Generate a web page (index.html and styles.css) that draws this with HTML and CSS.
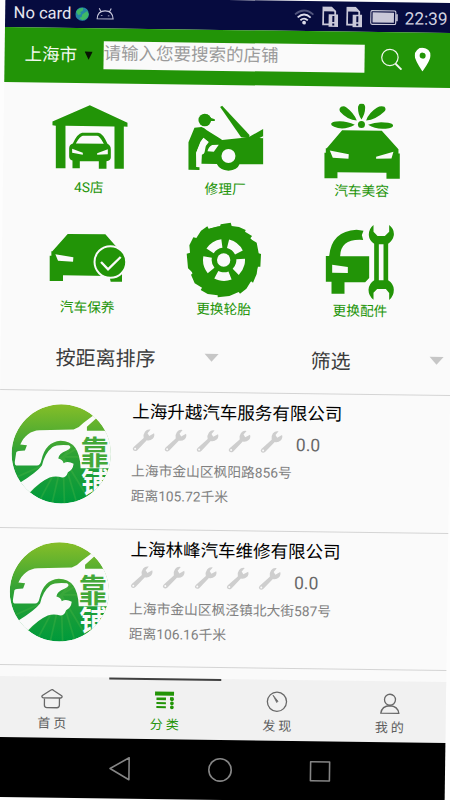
FILE: index.html
```html
<!DOCTYPE html>
<html lang="zh-CN">
<head>
<meta charset="utf-8">
<title>分类</title>
<link rel="stylesheet" href="styles.css">
</head>
<body>
<svg class="defs" aria-hidden="true">
  <defs>
    <linearGradient id="leaf" x1="0" y1="0" x2="0" y2="1">
      <stop offset="0" stop-color="#86be28"/><stop offset=".5" stop-color="#2fa136"/><stop offset="1" stop-color="#009a3c"/>
    </linearGradient>
    <clipPath id="disc"><circle cx="185" cy="191" r="149"/></clipPath>
    <symbol id="wrench" viewBox="0 0 24 24">
      <path d="M2.300 19.300L12.200 10.200Q11.300 6.600 13.400 3.700Q15.600 .8 19 1.600L16 5.300L17.700 8L22.500 5.300Q23.600 8.300 21.200 10.700Q18.700 13 15.300 12.300L6 22.300Q3.800 24 2 22.500Q.5 21 2.300 19.300Z"/>
      <circle cx="3.800" cy="20.900" r="1" fill="#fafafa"/>
    </symbol>
    <symbol id="logo" viewBox="20 26 330 330">
      <g transform="rotate(-.77 185 191)">
        <g clip-path="url(#disc)">
          <circle cx="185" cy="191" r="149" fill="url(#leaf)"/>
          <g stroke="#58b947" stroke-width="5" opacity=".3">
            <path d="M190 200L30 270M190 200L70 330M190 200L110 350M190 200L155 350M190 200L195 350M190 200L235 350M190 200L275 340M190 200L240 170M190 200L225 160M190 200L243 200"/>
          </g>
          <path fill="#fafafa" d="M120 120L222 118Q240 112 252 98L284 74L292 83L262 110V122H345V234H243Q240 152 183 152Q137 155 125 212Q122 226 112 226H50Q44 226 46 212L50 186Q52 181 76 181L82 165L62 163Q80 122 120 120Z"/>
          <path fill="#fafafa" d="M40 295L62 277Q112 246 127 226Q135 190 158 171Q172 162 208 165Q220 172 200 182Q178 190 176 205Q190 208 192 219Q205 211 222 221Q220 240 205 246Q200 262 188 262Q168 256 150 262Q120 275 90 308L60 330Z"/>
        </g>
        <text class="logo-text logo-green" transform="translate(243 223) scale(1 1.120)">靠</text>
        <g clip-path="url(#disc)"><text class="logo-text logo-white" x="245" y="309">铺</text></g>
      </g>
    </symbol>
  </defs>
</svg>

<div class="phone">
  <header class="status">
    <span class="carrier">No card</span>
    <svg class="globe" width="14" height="14" viewBox="0 0 14 14"><circle cx="7" cy="7" r="6.800" fill="#2486a5"/><path fill="#3fb866" d="M2 3Q5 .5 8 1L7.500 4L5 5L6 7L3 8L1 5ZM7 7.500L12 4L13.500 7Q12.500 12 7.500 13.300L4 11L6.500 10Z"/></svg>
    <svg class="droid" width="18" height="13" viewBox="0 0 18 13" fill="none" stroke="#c8c8dc" stroke-width="1.100"><path d="M1 11.500Q1.500 3.500 9 3.500Q16.500 3.500 17 11.500ZM4.800 4.500L3 1M13.200 4.500L15 1"/><path d="M5.500 8v.8M12.500 8v.8" stroke-width="1.600"/></svg>
    <span class="grow"></span>
    <svg class="wifi" width="20" height="16" viewBox="0 0 20 16" fill="none" stroke-width="1.800"><path stroke="#50547c" d="M.8 5.500Q10-2.500 19.200 5.500"/><path stroke="#dcdcea" d="M3.500 8.500Q10 2.500 16.500 8.500M6.300 11.300Q10 7.800 13.700 11.300"/><circle cx="10" cy="13.600" r="1.900" fill="#dcdcea"/></svg>
    <svg class="sim" width="16" height="21" viewBox="0 0 16 21"><path d="M1 1H9L13 5V18H1Z" fill="none" stroke="#c9c8d8" stroke-width="1.800"/><path d="M1 1H9L13 5H1Z" fill="#c9c8d8"/><path d="M6.500 8H16V20.500H6.500Z" fill="#c9c8d8"/><path d="M11.200 9.500V15.500M11.200 17V19" stroke="#060b3f" stroke-width="2"/></svg>
    <svg class="sim" width="16" height="21" viewBox="0 0 16 21"><path d="M1 1H9L13 5V18H1Z" fill="none" stroke="#c9c8d8" stroke-width="1.800"/><path d="M1 1H9L13 5H1Z" fill="#c9c8d8"/><path d="M6.500 8H16V20.500H6.500Z" fill="#c9c8d8"/><path d="M11.200 9.500V15.500M11.200 17V19" stroke="#060b3f" stroke-width="2"/></svg>
    <svg class="battery" width="28" height="15" viewBox="0 0 28 15"><rect x=".6" y=".6" width="25" height="13.800" rx="1.500" fill="none" stroke="#c9c8d8" stroke-width="1.200"/><rect x="2.400" y="2.400" width="21.400" height="10.200" fill="#c9c8d8"/><path d="M26.800 4V11" stroke="#c9c8d8" stroke-width="1.600"/></svg>
    <span class="clock">22:39</span>
  </header>

  <div class="searchbar">
    <span class="city">上海市</span>
    <svg class="caret" width="8" height="9" viewBox="0 0 8 9"><path d="M0 .5H8L4 8.500Z" fill="#071503"/></svg>
    <div class="field">请输入您要搜索的店铺</div>
    <svg class="magnifier" width="22" height="22" viewBox="0 0 22 22" fill="none" stroke="#f2f8f0"><circle cx="9.300" cy="9.300" r="8.200" stroke-width="1.200"/><path d="M15 15.500L21 21.300" stroke-width="1.900"/></svg>
    <svg class="pin" width="16" height="24" viewBox="0 0 16 24"><path fill="#fff" fill-rule="evenodd" d="M8 0A8 8 0 0 1 16 8Q16 12 8 24Q0 12 0 8A8 8 0 0 1 8 0ZM8 5A3 3 0 1 0 8 11A3 3 0 1 0 8 5Z"/></svg>
  </div>

  <section class="categories">
    <div class="category">
      <svg width="80" height="80" viewBox="60 30 240 240"><g transform="rotate(-.77 180 150)">
        <path d="M181 45L294 98V110L283 109V236H255V109L108 107V234H79V107L69 105V94Z"/>
        <path fill-rule="evenodd" d="M130 160Q144 130 158 128H206Q220 129 234 161Q244 166 244 178V202Q244 211 231 213V236H208V213H151V234H129V211Q119 208 119 198V175Q119 163 130 160ZM139 160L223 161Q211 138 203 137H160Q151 139 139 160ZM128 176V188L160 194V188ZM235 177L203 189V194L235 192Z"/>
      </g></svg>
      <span>4S店</span>
    </div>
    <div class="category">
      <svg width="80" height="80" viewBox="48 36 240 240"><g transform="rotate(-.77 168 156)">
        <circle cx="106" cy="90" r="19"/><path d="M112 72L125 84L136 88V93L114 93Z"/>
        <path d="M75 113L96 111Q105 114 112 121L153 146L158 150L237 142L281 117V223H210Q204 240 177 242Q151 240 142 222L96 221L97 194L103 191L105 175Q108 163 116 156L102 143L93 155L80 188V231L90 232V240L57 239V157Z"/>
        <path d="M152 51L158 47L240 135L239 145L215 142Z"/>
        <path fill="#fafafa" d="M80 190L94 156L102 144L118 156L109 168L105 188L96 192L93 231H84ZM114 184Q118 169 128 165L148 164L133 185ZM270 144L282 138V145Z"/>
        <circle cx="177" cy="198" r="21" fill="#fafafa"/>
      </g></svg>
      <span>修理厂</span>
    </div>
    <div class="category">
      <svg width="80" height="80" viewBox="53 41 240 240"><g transform="rotate(-.77 173 161)">
        <circle cx="170" cy="103" r="10.500"/>
        <path d="M170 88Q158 70 160 49Q164 38 171 39Q179 39 181 50Q182 70 170 88ZM156 91Q128 90 106 65Q101 55 109 50Q117 46 125 52Q147 68 156 91ZM184 91Q192 68 216 53Q228 46 239 50Q246 58 238 65Q213 89 184 91ZM150 104Q116 123 88 110Q78 106 79 101Q81 95 94 94Q123 91 150 104ZM190 104Q218 92 250 98Q264 100 265 106Q264 112 253 114Q217 121 190 104Z"/>
        <path fill-rule="evenodd" d="M112 120L231 122L281 177V190H285V266H245V248L98 246V264H59V188H63V174H66ZM75 181L84 203L131 206L132 192ZM266 185L214 200V206L260 205Z"/>
      </g></svg>
      <span>汽车美容</span>
    </div>
    <div class="category">
      <svg width="80" height="80" viewBox="55.5 30.5 240 240"><g transform="rotate(-.77 175.500 150.500)">
        <path d="M115 72L228 73L278 130V215H244L240 198L101 196V213H61V137H66V124H69ZM78 133L86 152L131 155L132 142Z" fill-rule="evenodd"/>
        <circle cx="243" cy="156" r="47.500" stroke="#fafafa" stroke-width="6"/>
        <path d="M215 156L236 178L274 141" fill="none" stroke="#fafafa" stroke-width="7"/>
      </g></svg>
      <span>汽车保养</span>
    </div>
    <div class="category">
      <svg width="80" height="80" viewBox="43.500 36 240 240"><g transform="rotate(-.77 163.500 156)">
        <circle cx="164" cy="150" r="103"/>
        <path d="M154 43L184 38L187 48L209 51L229 60L227 65L248 78L242 86L262 98L268 130L275 132L273 170H265L262 192L251 218L245 214L231 236L212 251L208 246L180 258L145 262V256L115 252L94 240L98 233L76 220L65 194L71 189L56 175L52 131L62 128L60 106L72 82L81 84L95 62L114 49L118 56L152 49Z"/>
        <circle cx="164" cy="150" r="50" pathLength="360" fill="none" stroke="#fafafa" stroke-width="26" stroke-dasharray="49 23" transform="rotate(-76 164 150)"/>
        <circle cx="163" cy="150" r="20" fill="#fafafa"/>
      </g></svg>
      <span>更换轮胎</span>
    </div>
    <div class="category">
      <svg width="80" height="80" viewBox="48 41.500 240 240"><g transform="rotate(-.77 168 161.500)">
        <path d="M73 138Q80 63 155 59L176 62L171 75L175 90Q107 85 106 139H193V204L181 217L119 217V251H80V215H63V138ZM82 164V188L129 189V171Z" fill-rule="evenodd"/>
        <path fill-rule="evenodd" d="M206 45V65L218 78H240L253 65V45Q269 57 267 76Q264 92 250 101V211Q266 221 267 239Q267 258 253 270V249L243 237H217L206 248V269Q191 257 191 239Q193 220 208 211V101Q193 92 192 76Q191 57 206 45ZM222 103V211H236V103Z"/>
      </g></svg>
      <span>更换配件</span>
    </div>
  </section>

  <div class="filters">
    <div class="filter filter-sort"><span>按距离排序</span><i class="drop"></i></div>
    <div class="filter filter-more"><span>筛选</span><i class="drop"></i></div>
  </div>

  <main class="shops">
    <article class="shop">
      <svg class="shop-logo" width="110" height="110"><use href="#logo"/></svg>
      <div class="shop-info">
        <h2>上海升越汽车服务有限公司</h2>
        <div class="rating"><svg><use href="#wrench"/></svg><svg><use href="#wrench"/></svg><svg><use href="#wrench"/></svg><svg><use href="#wrench"/></svg><svg><use href="#wrench"/></svg><b>0.0</b></div>
        <p>上海市金山区枫阳路856号</p>
        <p>距离105.72千米</p>
      </div>
    </article>
    <article class="shop">
      <svg class="shop-logo" width="110" height="110"><use href="#logo"/></svg>
      <div class="shop-info">
        <h2>上海林峰汽车维修有限公司</h2>
        <div class="rating"><svg><use href="#wrench"/></svg><svg><use href="#wrench"/></svg><svg><use href="#wrench"/></svg><svg><use href="#wrench"/></svg><svg><use href="#wrench"/></svg><b>0.0</b></div>
        <p>上海市金山区枫泾镇北大街587号</p>
        <p>距离106.16千米</p>
      </div>
    </article>
  </main>

  <nav class="tabs">
    <div class="tab">
      <svg width="24" height="22" viewBox="0 0 24 22"><path d="M12 1.800L21.600 7.800Q23 9.500 20.800 10.200H3.200Q1 9.500 2.400 7.800L10.500 2.500Q12 1.300 13.500 2.500M4.500 10.500V17.500Q4.500 20 7 20H17Q19.500 20 19.500 17.500V10.500"/></svg>
      <span>首页</span>
    </div>
    <div class="tab active">
      <svg width="24" height="22" viewBox="0 0 24 22"><path class="solid" d="M2 2.500H21V6.500H2ZM3.500 8.300H13V11H3.500ZM3.500 13H13V15H3.500ZM3.500 17H13V19H3.500ZM17 8H20.500V10H17Z"/><circle class="solid" cx="19" cy="10" r="1.900"/><circle class="solid" cx="19" cy="14" r="1.900"/><circle class="solid" cx="19" cy="18" r="1.900"/></svg>
      <span>分类</span>
    </div>
    <div class="tab">
      <svg width="24" height="22" viewBox="0 0 24 22"><circle cx="12" cy="11" r="9.600"/><path d="M8 4.500L13 10.500L11.800 11.800Z" class="needle"/></svg>
      <span>发现</span>
    </div>
    <div class="tab">
      <svg width="24" height="22" viewBox="0 0 24 22"><circle cx="12" cy="7.500" r="5.500"/><path d="M3 21Q4 13.800 12 13.500Q20 13.800 21 21Z"/></svg>
      <span>我的</span>
    </div>
  </nav>

  <footer class="keys">
    <svg width="24" height="26" viewBox="0 0 24 26"><path d="M21 2V24L2 13Z"/></svg>
    <svg width="26" height="26" viewBox="0 0 26 26"><circle cx="13" cy="13" r="11.200"/></svg>
    <svg width="24" height="24" viewBox="0 0 24 24"><rect x="2.500" y="2.500" width="19" height="19"/></svg>
  </footer>
</div>
</body>
</html>
```
FILE: styles.css
```css
* { box-sizing: border-box; }

body {
  margin: 0;
  width: 450px;
  height: 800px;
  overflow: hidden;
  background: #fdfdfd;
  font-family: Roboto, "Noto Sans CJK SC", sans-serif;
}

svg { display: block; flex: none; }
.defs { width: 0; height: 0; position: absolute; }

.phone {
  width: 450px;
  height: 800px;
  display: flex;
  flex-direction: column;
  background: #fafafa;
  transform: rotate(.77deg);
}

.status {
  height: 30px;
  flex: none;
  display: flex;
  align-items: center;
  padding: 1px 7.500px 0 8.500px;
  background: #060b3f;
  color: #e6e6f0;
}
.carrier { width: 61px; font-size: 16.5px; white-space: nowrap; }
.droid { margin-left: 7px; }
.grow { flex: 1; }
.sim { margin-left: 8px; }
.battery { margin-left: 8px; }
.clock { margin-left: 6px; font-size: 17.3px; color: #d2d2e0; }

.searchbar {
  height: 54.5px;
  flex: none;
  display: flex;
  align-items: center;
  padding: 0 0 0 20px;
  background: #229407;
}
.city { width: 60px; font-size: 17.5px; line-height: 24px; padding-bottom: 1px; color: #f4faf2; }
.field {
  width: 261px;
  height: 28px;
  margin-left: 11px;
  background: #fafafa;
  color: #9b9b9b;
  font-size: 17.5px;
  line-height: 25px;
  white-space: nowrap;
}
.magnifier { margin-left: 15.500px; }
.pin { margin-left: 12.500px; }

.categories {
  display: grid;
  grid-template-columns: repeat(3, 136.400px);
  grid-auto-rows: 120.500px;
  height: 245px;
  flex: none;
  padding: 17px 0 0 17.800px;
}
.category {
  display: flex;
  flex-direction: column;
  align-items: center;
  color: #229407;
  fill: #229407;
  font-size: 13.7px;
  line-height: 15px;
}

.filters {
  display: flex;
  height: 63.500px;
  flex: none;
  border-bottom: 1px solid #d4d4d4;
}
.filter {
  display: flex;
  height: 62px;
  align-items: center;
  color: #3c3c3c;
  font-size: 20px;
  line-height: 24px;
  padding-bottom: 2px;
}
.filter-sort { width: 225px; padding-left: 55px; }
.filter-more { width: 225px; padding-left: 85px; }
.drop {
  border: 7.500px solid transparent;
  border-bottom: 0;
  border-top: 8px solid #c6c6c6;
  margin: -3px 0 0 49px;
}
.filter-more .drop { margin-left: 79px; }

.shops { height: 285.500px; flex: none; }
.shop {
  display: flex;
  height: 137.500px;
  padding: 8px 0 0 7px;
  border-bottom: 1px solid #d4d4d4;
}
.shop-info { margin-left: 15px; }
.shop h2 {
  margin: 0 0 0 .5px;
  font-size: 17.5px;
  font-weight: 400;
  line-height: 24px;
  color: #000;
}
.rating {
  display: flex;
  height: 35px;
  padding-top: 3px;
  gap: 8px;
  align-items: center;
  fill: #cecece;
}
.rating svg { width: 24px; height: 24px; margin: -7px 0 0 -.5px; }
.rating svg + svg { margin-left: 0; }
.rating b { margin-left: 5px; font-size: 17.5px; font-weight: 400; color: #686868; }
.shop p {
  margin: 0;
  font-size: 13.750px;
  line-height: 25px;
  color: #808080;
  white-space: nowrap;
}

.tabs {
  height: 61.500px;
  flex: none;
  display: grid;
  grid-template-columns: repeat(4, 1fr);
  background: #f1f1f1;
}
.tab {
  display: flex;
  flex-direction: column;
  align-items: center;
  gap: 6px;
  padding-top: 9.500px;
  border-top: 2.500px solid transparent;
  color: #606060;
  font-size: 13px;
  line-height: 16px;
}
.tab span { letter-spacing: 3px; margin-right: -3px; }
.tab svg { fill: none; stroke: #686868; stroke-width: 1.300; }
.tab.active { border-top-color: #404040; color: #229407; }
.tab .solid { fill: #229407; stroke: none; }
.tab .needle { fill: #686868; stroke-width: .8; }

.keys {
  flex: 1;
  display: flex;
  align-items: center;
  justify-content: center;
  gap: 75px;
  background: #000;
}
.keys svg { fill: none; stroke: #858585; stroke-width: 1.600; stroke-linejoin: round; }

.logo-text { font: 700 85px "Noto Sans CJK SC", sans-serif; }
.logo-green { fill: #43a839; }
.logo-white { fill: #fafafa; }
```
